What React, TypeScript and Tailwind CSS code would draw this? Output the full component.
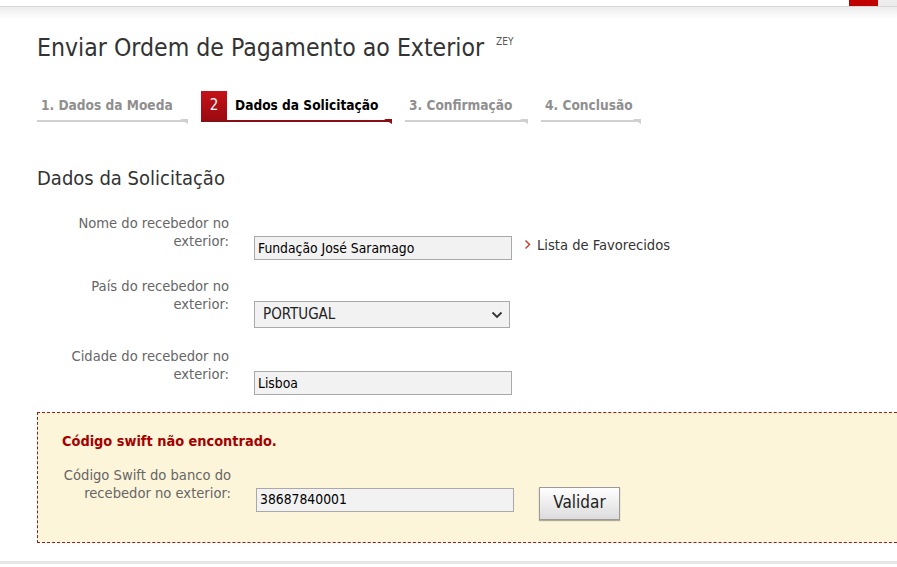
import React from 'react';

const FONT = "font-['DejaVu_Sans_Condensed','DejaVu_Sans',sans-serif]";

type Step = { label: string; width: string; state: 'done' | 'active' | 'todo' };

const steps: Step[] = [
  { label: '1. Dados da Moeda', width: 'w-[149px]', state: 'done' },
  { label: 'Dados da Solicitação', width: 'w-[189px]', state: 'active' },
  { label: '3. Confirmação', width: 'w-[121px]', state: 'todo' },
  { label: '4. Conclusão', width: 'w-[98px]', state: 'todo' },
];

const StepItem: React.FC<{ step: Step }> = ({ step }) => {
  if (step.state === 'active') {
    return (
      <div className={`relative flex h-[31px] items-stretch border-b-2 border-[#8a0f14] ${step.width}`}>
        <div className="flex w-[26px] items-center justify-center bg-gradient-to-b from-[#c41218] to-[#9c0a10] text-[15px] text-white">2</div>
        <div className="flex items-center pl-[8px] text-[13.6px] font-bold text-black">{step.label}</div>
        <span className="absolute -bottom-[4px] right-[-2px] h-0 w-0 border-l-[8px] border-t-[5px] border-l-transparent border-t-[#8a0f14]" />
      </div>
    );
  }
  return (
    <div className={`relative flex h-[31px] items-center border-b-2 border-[#d0d0d0] pl-[4px] ${step.width}`}>
      <span className="text-[13.6px] font-bold text-[#8f8f8f]">{step.label}</span>
      <span className="absolute -bottom-[4px] right-[-2px] h-0 w-0 border-l-[8px] border-t-[5px] border-l-transparent border-t-[#d0d0d0]" />
    </div>
  );
};

const FieldLabel: React.FC<{ children: React.ReactNode }> = ({ children }) => (
  <div className="w-[192px] text-right text-[14.6px] leading-[18px] text-[#666]">{children}</div>
);

const TextInput: React.FC<{ value: string; mt?: string }> = ({ value, mt = 'mt-[22px]' }) => (
  <div className={`${mt} ml-[25px] flex h-[24px] w-[258px] items-center border border-[#a9a9a9] bg-[#f2f2f2] pl-[3px] text-[13.8px] text-black`}>
    {value}
  </div>
);

export default function App() {
  return (
    <div className={`relative h-[567px] w-[897px] overflow-hidden bg-white ${FONT}`}>
      {/* top bar */}
      <div className="flex h-[7px] border-b border-[#d6d6d6]">
        <div className="flex-1" />
        <div className="w-[29px] bg-[#c00000]" />
        <div className="w-[19px] bg-[#ececec]" />
      </div>
      <div className="h-[12px] bg-gradient-to-b from-[#ededed] to-white" />

      <div className="pl-[37px]">
        <div className="mt-[13px] flex items-start">
          <h1 className="text-[24.6px] leading-[32px] text-[#333]">Enviar Ordem de Pagamento ao Exterior</h1>
          <span className="ml-[12px] mt-[2px] text-[10px] text-[#555]">ZEY</span>
        </div>

        <div className="mt-[27px] flex items-end gap-[15px]">
          {steps.map((s) => (
            <StepItem key={s.label} step={s} />
          ))}
        </div>

        <h2 className="mt-[43px] text-[20px] leading-[26px] text-[#333]">Dados da Solicitação</h2>

        <div className="mt-[23px] flex items-start">
          <FieldLabel>
            Nome do recebedor no
            <br />
            exterior:
          </FieldLabel>
          <TextInput value="Fundação José Saramago" />
          <div className="mt-[20px] ml-[12px] flex items-center text-[14.6px] text-[#333]">
            <svg className="mr-[6px]" width="7" height="11" viewBox="0 0 7 11" fill="none" stroke="#c0392b" strokeWidth="1.4">
              <path d="M1.5 1.5 5.5 5.5l-4 4" />
            </svg>
            Lista de Favorecidos
          </div>
        </div>

        <div className="mt-[17px] flex items-start">
          <FieldLabel>
            País do recebedor no
            <br />
            exterior:
          </FieldLabel>
          <div className="mt-[24px] ml-[25px] flex h-[27px] w-[256px] items-center justify-between border border-[#a9a9a9] bg-[#f2f2f2] pl-[8px] pr-[6px] text-[15px] text-[#222]">
            PORTUGAL
            <svg width="12" height="8" viewBox="0 0 12 8" fill="none" stroke="#333" strokeWidth="1.8">
              <path d="M1.5 1.5 6 6l4.5-4.5" />
            </svg>
          </div>
        </div>

        <div className="mt-[19px] flex items-start">
          <FieldLabel>
            Cidade do recebedor no
            <br />
            exterior:
          </FieldLabel>
          <TextInput value="Lisboa" mt="mt-[24px]" />
        </div>

        <div className="mt-[17px] h-[131px] w-[880px] border border-dashed border-[#9a1b1b] bg-[#fdf5da] pl-[24px] pt-[18px]">
          <div className="text-[14.4px] font-bold text-[#a50000]">Código swift não encontrado.</div>
          <div className="mt-[13px] flex items-start">
            <div className="w-[169px] text-right text-[14.6px] leading-[18px] text-[#666]">
              Código Swift do banco do
              <br />
              recebedor no exterior:
            </div>
            <TextInput value="38687840001" />
            <button className="mt-[21px] ml-[25px] h-[33px] w-[81px] border border-[#9a9a9a] bg-gradient-to-b from-white to-[#dcdcdc] text-[17px] text-[#222] shadow-[0_1px_1px_rgba(0,0,0,0.3)]">
              Validar
            </button>
          </div>
        </div>
      </div>

      <div className="absolute bottom-[3px] left-0 right-0 h-[3px] bg-[#e6e6e6]" />
    </div>
  );
}
